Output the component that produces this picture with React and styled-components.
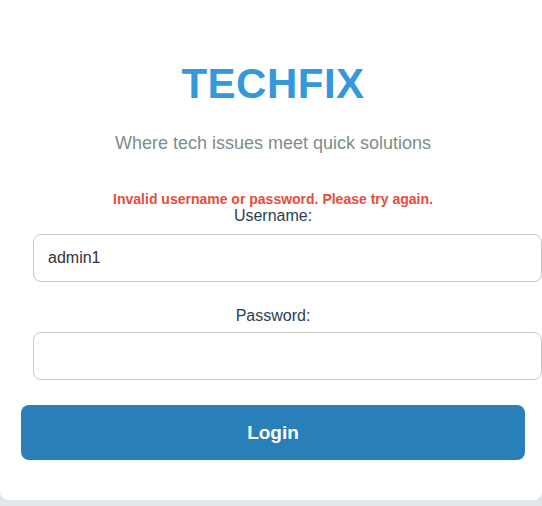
import React from "react";
import styled, { createGlobalStyle } from "styled-components";

const GlobalStyle = createGlobalStyle`
  html, body {
    margin: 0;
    padding: 0;
    background: #e3e6ea;
    overflow: hidden;
  }
  body {
    font-family: "Liberation Sans", Arial, sans-serif;
  }
`;

const Card = styled.div`
  background: #ffffff;
  border-radius: 0 0 8px 8px;
  box-shadow: 0 2px 6px rgba(0, 0, 0, 0.06);
  padding: 60px 17px 40px 21px;
  text-align: center;
`;

const Title = styled.h1`
  margin: 0;
  font-size: 42px;
  font-weight: 700;
  color: #3498db;
  letter-spacing: 0.5px;
`;

const Tagline = styled.p`
  margin: 25px 0 0;
  font-size: 18px;
  color: #7f8c8d;
`;

const ErrorText = styled.p`
  margin: 37px 0 0;
  font-size: 14px;
  font-weight: 700;
  color: #e74c3c;
`;

const Form = styled.form`
  display: flex;
  flex-direction: column;
`;

const Field = styled.div`
  display: flex;
  flex-direction: column;
  align-items: center;
  margin-top: ${(p) => p.$top || 0}px;
`;

const Label = styled.label`
  font-size: 16px;
  color: #2c3e50;
  margin-bottom: ${(p) => p.$gap}px;
`;

const Input = styled.input`
  box-sizing: border-box;
  align-self: flex-start;
  width: calc(100% + 5px);
  height: 48px;
  margin-left: 12px;
  padding: 0 14px;
  border: 1px solid #c8c8c8;
  border-radius: 8px;
  font-family: "Liberation Sans", Arial, sans-serif;
  font-size: 16px;
  color: #333;
  background: #fff;
  outline: none;
`;

const Button = styled.button`
  margin-top: 25px;
  height: 55px;
  border: none;
  border-radius: 8px;
  background: #2980b9;
  color: #fff;
  font-family: "Liberation Sans", Arial, sans-serif;
  font-size: 19px;
  font-weight: 700;
  cursor: pointer;
`;

export default function App() {
  return (
    <>
      <GlobalStyle />
      <Card>
        <Title>TECHFIX</Title>
        <Tagline>Where tech issues meet quick solutions</Tagline>
        <ErrorText>Invalid username or password. Please try again.</ErrorText>
        <Form onSubmit={(e) => e.preventDefault()}>
          <Field>
            <Label htmlFor="username" $gap={9}>Username:</Label>
            <Input id="username" type="text" defaultValue="admin1" />
          </Field>
          <Field $top={25}>
            <Label htmlFor="password" $gap={7}>Password:</Label>
            <Input id="password" type="password" />
          </Field>
          <Button type="submit">Login</Button>
        </Form>
      </Card>
    </>
  );
}
